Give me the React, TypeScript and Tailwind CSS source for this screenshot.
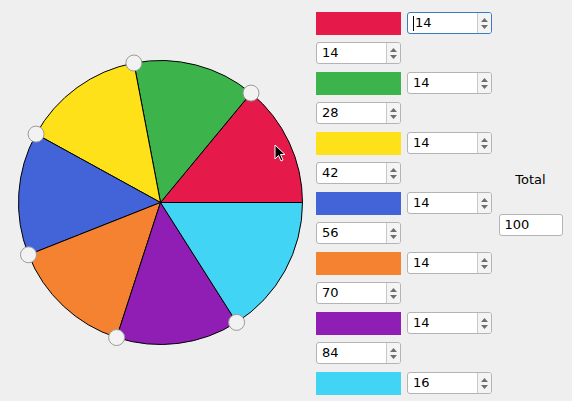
import * as React from "react";

const slices = [
  { color: "#e6194b", pct: 14, mid: 14 },
  { color: "#3cb44b", pct: 14, mid: 28 },
  { color: "#ffe119", pct: 14, mid: 42 },
  { color: "#4363d8", pct: 14, mid: 56 },
  { color: "#f58231", pct: 14, mid: 70 },
  { color: "#911eb4", pct: 14, mid: 84 },
  { color: "#42d4f4", pct: 16, mid: null },
];

const CX = 160.5;
const CY = 202.5;
const R = 142;

function pt(deg: number, r = R) {
  const a = (deg * Math.PI) / 180;
  return [CX + r * Math.cos(a), CY - r * Math.sin(a)];
}

function Pie() {
  let start = 0;
  const paths: React.ReactNode[] = [];
  const handles: number[] = [];
  slices.forEach((s, i) => {
    const end = start + (s.pct / 100) * 360;
    const [x1, y1] = pt(start);
    const [x2, y2] = pt(end);
    const large = end - start > 180 ? 1 : 0;
    paths.push(
      <path
        key={i}
        d={`M${CX} ${CY} L${x1} ${y1} A${R} ${R} 0 ${large} 0 ${x2} ${y2} Z`}
        fill={s.color}
        stroke="#000"
        strokeWidth={1}
        strokeLinejoin="round"
      />,
    );
    if (i < slices.length - 1) handles.push(end);
    start = end;
  });

  return (
    <svg width={316} height={401} viewBox="0 0 316 401" className="shrink-0">
      {paths}
      {handles.map((a) => {
        const [x, y] = pt(a);
        return <circle key={a} cx={x} cy={y} r={8} fill="#f2f2f2" stroke="#9a9a9a" strokeWidth={1} />;
      })}
    </svg>
  );
}

function SpinBox({ value, focused }: { value: number; focused?: boolean }) {
  return (
    <div
      className={
        "flex h-[22px] w-[85px] overflow-hidden rounded-[3px] border bg-white " +
        (focused ? "border-[#3a7bbf]" : "border-[#b4b4b4]")
      }
    >
      <div className="relative flex flex-1 items-center pl-[5px] text-[13px] text-black">
        {focused && <span className="mr-px h-[15px] w-px bg-black" />}
        {value}
      </div>
      <div className="flex w-[14px] flex-col items-center justify-center gap-[3px] border-l border-[#c8c8c8] bg-[#f4f4f4]">
        <svg width="7" height="4" viewBox="0 0 7 4">
          <path d="M3.5 0 L7 4 L0 4 Z" fill="#6e6e6e" />
        </svg>
        <svg width="7" height="4" viewBox="0 0 7 4">
          <path d="M0 0 L7 0 L3.5 4 Z" fill="#6e6e6e" />
        </svg>
      </div>
    </div>
  );
}

export default function App() {
  return (
    <div
      className="relative flex h-[401px] w-[572px] overflow-hidden bg-[#efefef]"
      style={{ fontFamily: '"DejaVu Sans", sans-serif' }}
    >
      <Pie />
      <div className="grid grid-cols-[85px_85px] content-start gap-x-[6px] pt-[8px]">
        {slices.map((s, i) => (
          <React.Fragment key={i}>
            <div className="flex h-[30px] items-center">
              <div className="h-[23px] w-[85px]" style={{ backgroundColor: s.color }} />
            </div>
            <div className="flex h-[30px] items-center">
              <SpinBox value={s.pct} focused={i === 0} />
            </div>
            {s.mid !== null && (
              <>
                <div className="flex h-[30px] items-center">
                  <SpinBox value={s.mid} />
                </div>
                <div />
              </>
            )}
          </React.Fragment>
        ))}
      </div>
      <div className="flex flex-1 flex-col items-center pl-[6px] pr-[9px] pt-[172px]">
        <div className="text-[13px] leading-[16px] text-black">Total</div>
        <div className="mt-[26px] flex h-[22px] w-[64px] items-center rounded-[3px] border border-[#b4b4b4] bg-white pl-[5px] text-[13px] text-black">
          100
        </div>
      </div>
      <svg className="absolute left-[274px] top-[144px]" width="12" height="19" viewBox="0 0 12 19">
        <path d="M1 1 L1 15 L4.5 11.5 L7 17 L9 16 L6.5 10.5 L11 10.5 Z" fill="#000" stroke="#fff" strokeWidth="1" strokeLinejoin="round" />
      </svg>
    </div>
  );
}
